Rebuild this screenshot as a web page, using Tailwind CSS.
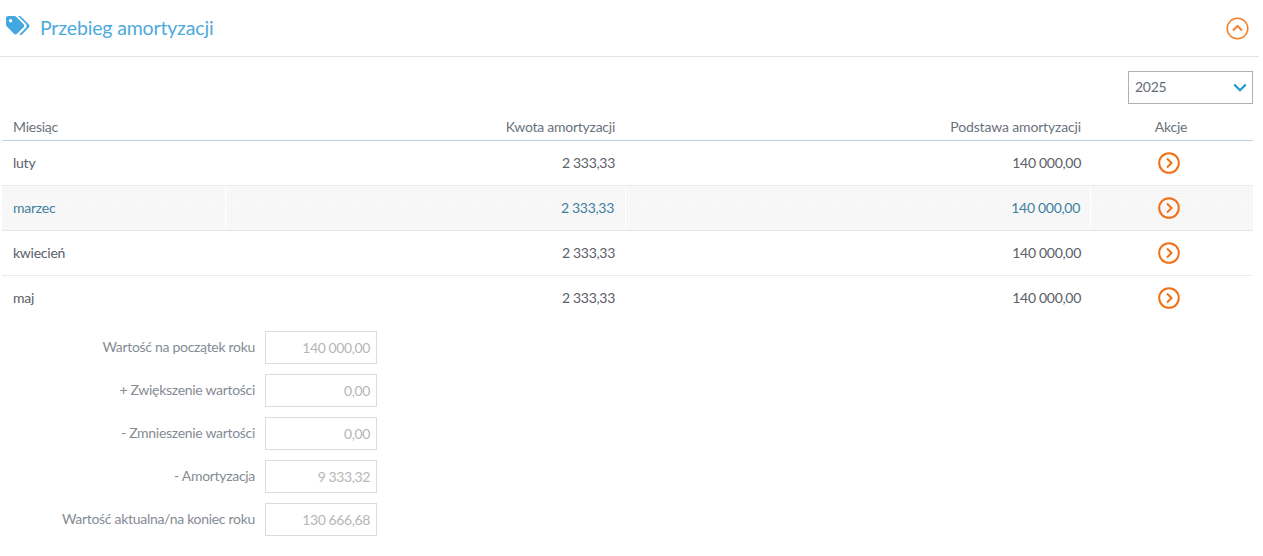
<!DOCTYPE html>
<html lang="pl">
<head>
<meta charset="utf-8">
<script src="https://cdn.jsdelivr.net/npm/@tailwindcss/browser@4"></script>
</head>
<body class="bg-white font-['Lato','Open_Sans',sans-serif] text-[14px] tracking-[-0.25px] text-[#555c66]">
<div class="w-[1263px] h-[556px] overflow-hidden">
  <header class="mr-[4px] h-[57px] border-b border-[#e3e3e3] flex items-center justify-between pl-[6px] pr-[10px]">
    <div class="flex items-center gap-[10px]">
      <svg width="24" height="20" viewBox="0 0 24 20" class="mt-[-5px]"><path fill="#42a8df" d="M0 2.200C0 1 1 0 2.200 0h6.300c.6 0 1.100.2 1.500.6l7.600 7.600c.8.8.8 2.200 0 3l-6.600 6.600c-.8.8-2.200.8-3 0L.6 10.200C.2 9.800 0 9.300 0 8.700zM4.600 3a1.700 1.700 0 1 0 0 3.400 1.700 1.700 0 0 0 0-3.400z"/><path fill="#42a8df" d="M12 0h1.400c.6 0 1.100.2 1.500.6l7.900 7.900c.9.9.9 2.200 0 3.100l-6.800 6.800c-.7.7-1.900.8-2.700.2l6.500-6.500c1.100-1.200 1.100-3.200 0-4.400z"/></svg>
      <h2 class="text-[19.500px] leading-none font-normal tracking-[-0.16px] text-[#4eaadc] mb-[1px]">Przebieg amortyzacji</h2>
    </div>
    <svg width="23" height="23" viewBox="0 0 23 23" fill="none" stroke="#f5822a" class="mt-[1px]"><circle cx="11.500" cy="11.500" r="10.300" stroke-width="1.500"/><path d="M7 13.500l4.500-4.500 4.500 4.500" stroke-width="2"/></svg>
  </header>
  <div class="flex justify-end pr-[10px] mt-[14px] h-[33px]">
    <div class="w-[125px] h-[33px] border border-[#aeb1b4] flex items-center justify-between pl-[6px] pr-[5px] text-[#666c74]">
      <span class="mb-[2px]">2025</span>
      <svg width="14" height="9" viewBox="0 0 14 9" fill="none" stroke="#2299cc" stroke-width="2.200"><path d="M1.200 1.500l5.800 5.800 5.800-5.800"/></svg>
    </div>
  </div>
  <section class="ml-[2px] w-[1251px] mt-[7px]">
    <div class="flex h-[30px] items-center border-b border-[#bcd2e2] text-[#6b727b] pt-[2px]">
      <div class="w-[224px] pl-[11px]">Miesiąc</div>
      <div class="w-[400px] pr-[11px] text-right">Kwota amortyzacji</div>
      <div class="w-[465px] pr-[10px] text-right tracking-[-0.15px]">Podstawa amortyzacji</div>
      <div class="w-[162px] pr-[2px] text-center">Akcje</div>
    </div>
    <div class="flex h-[45px] items-stretch border-b border-[#ebebeb] text-[#5a6068] pb-[1px]">
      <div class="w-[224px] pl-[11px] flex items-center">luty</div>
      <div class="w-[400px] pr-[11px] flex items-center justify-end tracking-[-0.3px]">2 333,33</div>
      <div class="w-[465px] pr-[10px] flex items-center justify-end tracking-[-0.3px]">140 000,00</div>
      <div class="w-[162px] pr-[6px] flex items-center justify-center"><svg width="22" height="22" viewBox="0 0 22 22" fill="none" stroke="#f36f14"><circle cx="11" cy="11" r="9.800" stroke-width="2"/><path d="M9 6.500l4.500 4.500-4.500 4.500" stroke-width="2"/></svg></div>
    </div>
    <div class="flex h-[45px] items-stretch border-b border-[#e6e6e6] bg-[#f8f8f8] bg-[radial-gradient(#f1f1f1_1px,transparent_1px)] bg-[length:3px_3px] text-[#3f7f9f] pb-[1px]">
      <div class="w-[224px] pl-[11px] flex items-center border-r border-white">marzec</div>
      <div class="w-[400px] pr-[11px] flex items-center justify-end border-r border-white tracking-[-0.3px]">2 333,33</div>
      <div class="w-[465px] pr-[10px] flex items-center justify-end border-r border-white tracking-[-0.3px]">140 000,00</div>
      <div class="w-[162px] pr-[6px] flex items-center justify-center"><svg width="22" height="22" viewBox="0 0 22 22" fill="none" stroke="#f36f14"><circle cx="11" cy="11" r="9.800" stroke-width="2"/><path d="M9 6.500l4.500 4.500-4.500 4.500" stroke-width="2"/></svg></div>
    </div>
    <div class="flex h-[45px] items-stretch border-b border-[#ebebeb] text-[#5a6068] pb-[1px]">
      <div class="w-[224px] pl-[11px] flex items-center">kwiecień</div>
      <div class="w-[400px] pr-[11px] flex items-center justify-end tracking-[-0.3px]">2 333,33</div>
      <div class="w-[465px] pr-[10px] flex items-center justify-end tracking-[-0.3px]">140 000,00</div>
      <div class="w-[162px] pr-[6px] flex items-center justify-center"><svg width="22" height="22" viewBox="0 0 22 22" fill="none" stroke="#f36f14"><circle cx="11" cy="11" r="9.800" stroke-width="2"/><path d="M9 6.500l4.500 4.500-4.500 4.500" stroke-width="2"/></svg></div>
    </div>
    <div class="flex h-[45px] items-stretch text-[#5a6068] pb-[2px]">
      <div class="w-[224px] pl-[11px] flex items-center">maj</div>
      <div class="w-[400px] pr-[11px] flex items-center justify-end tracking-[-0.3px]">2 333,33</div>
      <div class="w-[465px] pr-[10px] flex items-center justify-end tracking-[-0.3px]">140 000,00</div>
      <div class="w-[162px] pr-[6px] flex items-center justify-center"><svg width="22" height="22" viewBox="0 0 22 22" fill="none" stroke="#f36f14"><circle cx="11" cy="11" r="9.800" stroke-width="2"/><path d="M9 6.500l4.500 4.500-4.500 4.500" stroke-width="2"/></svg></div>
    </div>
  </section>
  <form class="mt-[10px] flex flex-col gap-[10px] w-[377px] text-[#858b94] tracking-[-0.3px]">
    <div class="flex items-center justify-end gap-[10px]"><span class="mb-[2px]">Wartość na początek roku</span><div class="w-[112px] h-[33px] border border-[#dcdcdc] flex items-center justify-end pr-[6px] text-[#b6b6b6] tracking-[-0.4px]">140 000,00</div></div>
    <div class="flex items-center justify-end gap-[10px]"><span class="mb-[2px]">+ Zwiększenie wartości</span><div class="w-[112px] h-[33px] border border-[#dcdcdc] flex items-center justify-end pr-[6px] text-[#b6b6b6] tracking-[-0.4px]">0,00</div></div>
    <div class="flex items-center justify-end gap-[10px]"><span class="mb-[2px]">- Zmnieszenie wartości</span><div class="w-[112px] h-[33px] border border-[#dcdcdc] flex items-center justify-end pr-[6px] text-[#b6b6b6] tracking-[-0.4px]">0,00</div></div>
    <div class="flex items-center justify-end gap-[10px]"><span class="mb-[2px]">- Amortyzacja</span><div class="w-[112px] h-[33px] border border-[#dcdcdc] flex items-center justify-end pr-[6px] text-[#b6b6b6] tracking-[-0.4px]">9 333,32</div></div>
    <div class="flex items-center justify-end gap-[10px]"><span class="mb-[2px]">Wartość aktualna/na koniec roku</span><div class="w-[112px] h-[33px] border border-[#dcdcdc] flex items-center justify-end pr-[6px] text-[#b6b6b6] tracking-[-0.4px]">130 666,68</div></div>
  </form>
</div>
</body>
</html>
